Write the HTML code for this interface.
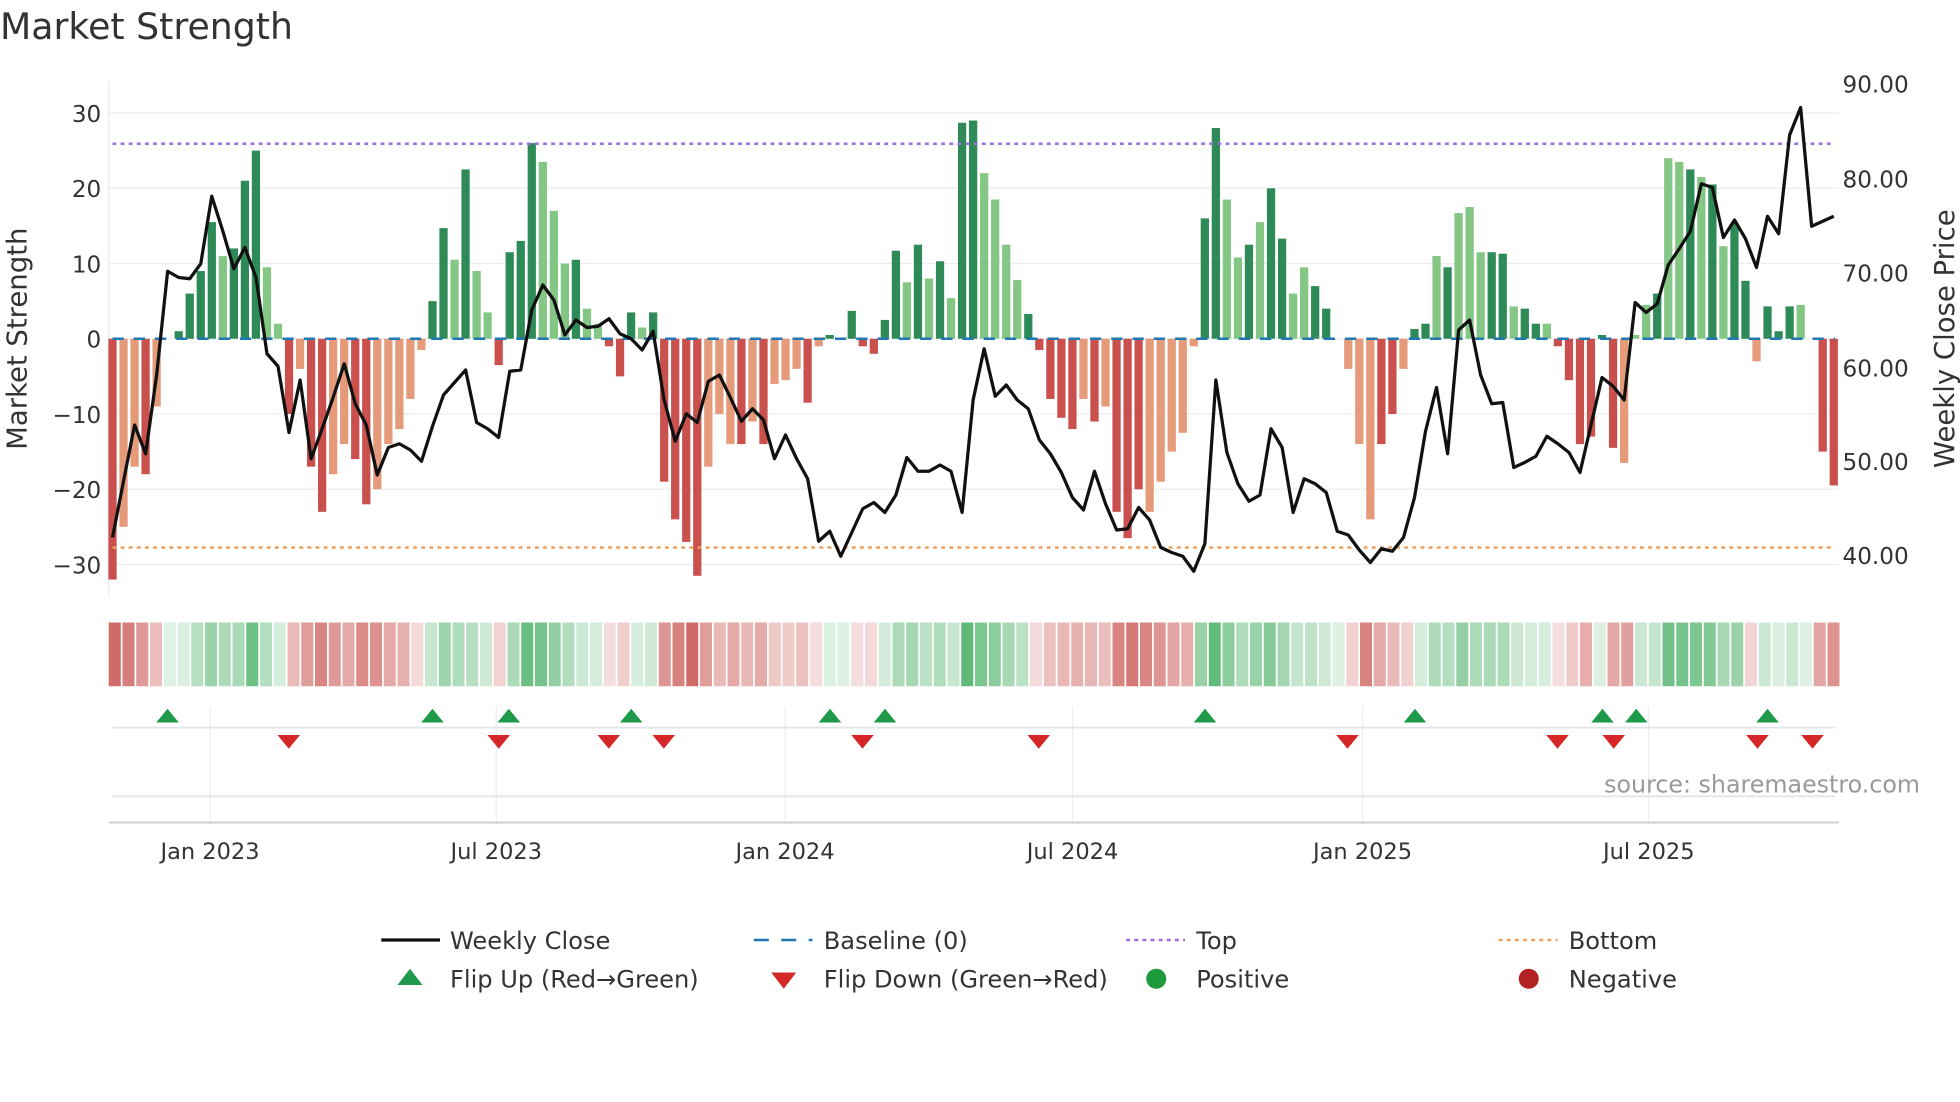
<!DOCTYPE html>
<html><head><meta charset="utf-8">
<style>
html,body{margin:0;padding:0;background:#fff;width:1960px;height:1102px;overflow:hidden}
svg{display:block}
text{font-family:"DejaVu Sans","Liberation Sans",sans-serif}
</style></head><body>
<svg id="s" width="1960" height="1102" viewBox="0 0 1568 881.6" xmlns="http://www.w3.org/2000/svg"></svg>
<script>
const S=document.getElementById('s');let h='';
const bars=[-32,-25,-17,-18,-9,0,1,6,9,15.5,11,12,21,25,9.5,2,-10,-4,-17,-23,-18,-14,-16,-22,-20,-14,-12,-8,-1.5,5,14.7,10.5,22.5,9,3.5,-3.5,11.5,13,26,23.5,17,10,10.5,4,2,-1,-5,3.5,1.5,3.5,-19,-24,-27,-31.5,-17,-10,-14,-14,-11,-14,-6,-5.5,-4,-8.5,-1,0.5,0,3.7,-1,-2,2.5,11.7,7.5,12.5,8,10.3,5.4,28.7,29,22,18.5,12.5,7.8,3.3,-1.5,-8,-10.5,-12,-8,-11,-9,-23,-26.5,-20,-23,-19,-15,-12.5,-1,16,28,18.5,10.8,12.5,15.5,20,13.3,6,9.5,7,4,0,-4,-14,-24,-14,-10,-4,1.3,2,11,9.5,16.7,17.5,11.5,11.5,11.3,4.3,4,2,2,-1,-5.5,-14,-13,0.5,-14.5,-16.5,0.5,4.5,6,24,23.5,22.5,21.5,20.5,12.3,15.3,7.7,-3,4.3,1,4.3,4.5,0,-15,-19.5];
const light=new Set([1,2,4,10,14,15,17,20,21,24,25,26,27,28,31,33,34,39,40,41,43,44,48,54,55,56,58,60,61,62,64,72,74,76,79,80,81,82,88,90,94,95,96,97,98,101,102,104,107,108,112,113,114,117,120,122,123,124,127,130,137,138,139,141,142,144,146,149,153]);
const x0=90,dx=(1467-90)/(bars.length-1);
const yv=v=>271-v*6.02;
[30,20,10,0,-10,-20,-30].forEach(v=>{h+=`<line x1="87" x2="1471" y1="${yv(v)}" y2="${yv(v)}" stroke="#ebedf0" stroke-width="1"/>`;
h+=`<text x="81" y="${yv(v)+7}" font-size="18.5" fill="#333" text-anchor="end">${v<0?'−'+(-v):v}</text>`});
[168,397,628,858,1090,1319].forEach(x=>{h+=`<line x1="${x}" x2="${x}" y1="565" y2="658" stroke="#ebedf0"/>`});
h+=`<line x1="87" x2="87" y1="65" y2="478" stroke="#ebedf0"/>`;
[[90,67],[80,143],[70,218],[60,294],[50,369],[40,444]].forEach(([v,y])=>{h+=`<text x="1474" y="${y+7}" font-size="18.5" fill="#333">${v}.00</text>`});
bars.forEach((v,i)=>{const x=x0+i*dx;const L=light.has(i);let c;
if(v>=0)c=L?'#84c683':'#2e8b57';else c=L?'#e59a7a':'#c9504c';
const y=Math.min(yv(0),yv(v)),hh=Math.abs(v*6.02);
h+=`<rect x="${x-3.3}" y="${y}" width="6.6" height="${hh}" fill="${c}"/>`});
h+=`<line x1="90" x2="1468" y1="271" y2="271" stroke="#1f77b4" stroke-width="2" stroke-dasharray="9,8"/>`;
h+=`<line x1="90" x2="1468" y1="115" y2="115" stroke="#9b6be0" stroke-width="2" stroke-dasharray="3,3.5"/>`;
h+=`<line x1="90" x2="1468" y1="438" y2="438" stroke="#ee9f5e" stroke-width="2" stroke-dasharray="3,3.5"/>`;
const p=[430,385,340,363,300,217,222,223,211,157,185,215,198,222,283,293,346,304,367,343,318,291,323,340,380,358,355,360,369,341,316,306,296,338,343,350,297,296,248,228,240,268,256,262,261,255,267,271,280,265,320,353,331,338,305,300,318,337,327,336,367,348,367,383,433,425,445,426,407,402,410,396,366,377,377,372,377,410,320,279,317,308,320,327,352,363,378,398,408,377,403,424,423,406,416,438,442,445,457,435,304,362,387,401,396,343,358,410,383,387,394,425,428,440,450,439,441,430,398,345,310,363,264,256,300,323,322,374,370,365,349,355,362,378,340,302,309,320,242,250,243,212,199,185,147,150,190,176,191,214,173,187,108,86,181,177,173];
const pdx=(1467-90)/(p.length-1);
h+=`<polyline fill="none" stroke="#111" stroke-width="2.6" stroke-linejoin="round" points="${p.map((y,i)=>(90+i*pdx).toFixed(1)+','+y).join(' ')}"/>`;
for(let x=87;x<1471;x+=11){const i=Math.max(0,Math.min(bars.length-1,Math.round((x+5-x0)/dx)));const v=bars[i];const a=Math.min(1,0.2+Math.abs(v)/30*0.8);
const c=v>=0?`rgba(60,170,90,${a*0.85})`:`rgba(200,80,76,${a*0.85})`;
h+=`<rect x="${x}" y="498" width="9.6" height="51" fill="${c}"/>`}
h+=`<line x1="90" x2="1468" y1="582" y2="582" stroke="#e3e5e8" stroke-width="1.5"/>`;
h+=`<line x1="90" x2="1468" y1="637" y2="637" stroke="#e3e5e8" stroke-width="1.5"/>`;
h+=`<line x1="87" x2="1471" y1="658" y2="658" stroke="#ccc" stroke-width="1.5"/>`;
[134,346,407,505,664,708,964,1132,1282,1309,1414].forEach(x=>{h+=`<polygon points="${x-9},578 ${x+9},578 ${x},567" fill="#1f9a4a"/>`});
[231,399,487,531,690,831,1078,1246,1291,1406,1450].forEach(x=>{h+=`<polygon points="${x-9},588 ${x+9},588 ${x},599" fill="#d62728"/>`});
[[168,'Jan 2023'],[397,'Jul 2023'],[628,'Jan 2024'],[858,'Jul 2024'],[1090,'Jan 2025'],[1319,'Jul 2025']].forEach(([x,t])=>{h+=`<text x="${x}" y="687" font-size="18" fill="#333" text-anchor="middle">${t}</text>`});
h+=`<text x="1536" y="634" font-size="19" fill="#999" text-anchor="end">source: sharemaestro.com</text>`;
h+=`<text x="0" y="31" font-size="29" fill="#333">Market Strength</text>`;
h+=`<text transform="translate(21,271) rotate(-90)" font-size="22" fill="#333" text-anchor="middle">Market Strength</text>`;
h+=`<text transform="translate(1563,271) rotate(-90)" font-size="22" fill="#333" text-anchor="middle">Weekly Close Price</text>`;
const lt=(x,y,t)=>`<text x="${x}" y="${y+7}" font-size="19.3" fill="#333">${t}</text>`;
h+=`<line x1="305" x2="352" y1="752" y2="752" stroke="#111" stroke-width="2.6"/>`+lt(360,752,'Weekly Close');
h+=`<line x1="603" x2="650" y1="752" y2="752" stroke="#1f77b4" stroke-width="2" stroke-dasharray="12,10"/>`+lt(659,752,'Baseline (0)');
h+=`<line x1="901" x2="948" y1="752" y2="752" stroke="#9b6be0" stroke-width="2" stroke-dasharray="3,3.5"/>`+lt(957,752,'Top');
h+=`<line x1="1199" x2="1246" y1="752" y2="752" stroke="#ee9f5e" stroke-width="2" stroke-dasharray="3,3.5"/>`+lt(1255,752,'Bottom');
h+=`<polygon points="318,788 338,788 328,775" fill="#1f9a4a"/>`+lt(360,783,'Flip Up (Red→Green)');
h+=`<polygon points="617,778 637,778 627,791" fill="#d62728"/>`+lt(659,783,'Flip Down (Green→Red)');
h+=`<circle cx="925" cy="783" r="8" fill="#1f9a3a"/>`+lt(957,783,'Positive');
h+=`<circle cx="1223" cy="783" r="8" fill="#b22222"/>`+lt(1255,783,'Negative');
S.innerHTML=h;
</script>
</body></html>
